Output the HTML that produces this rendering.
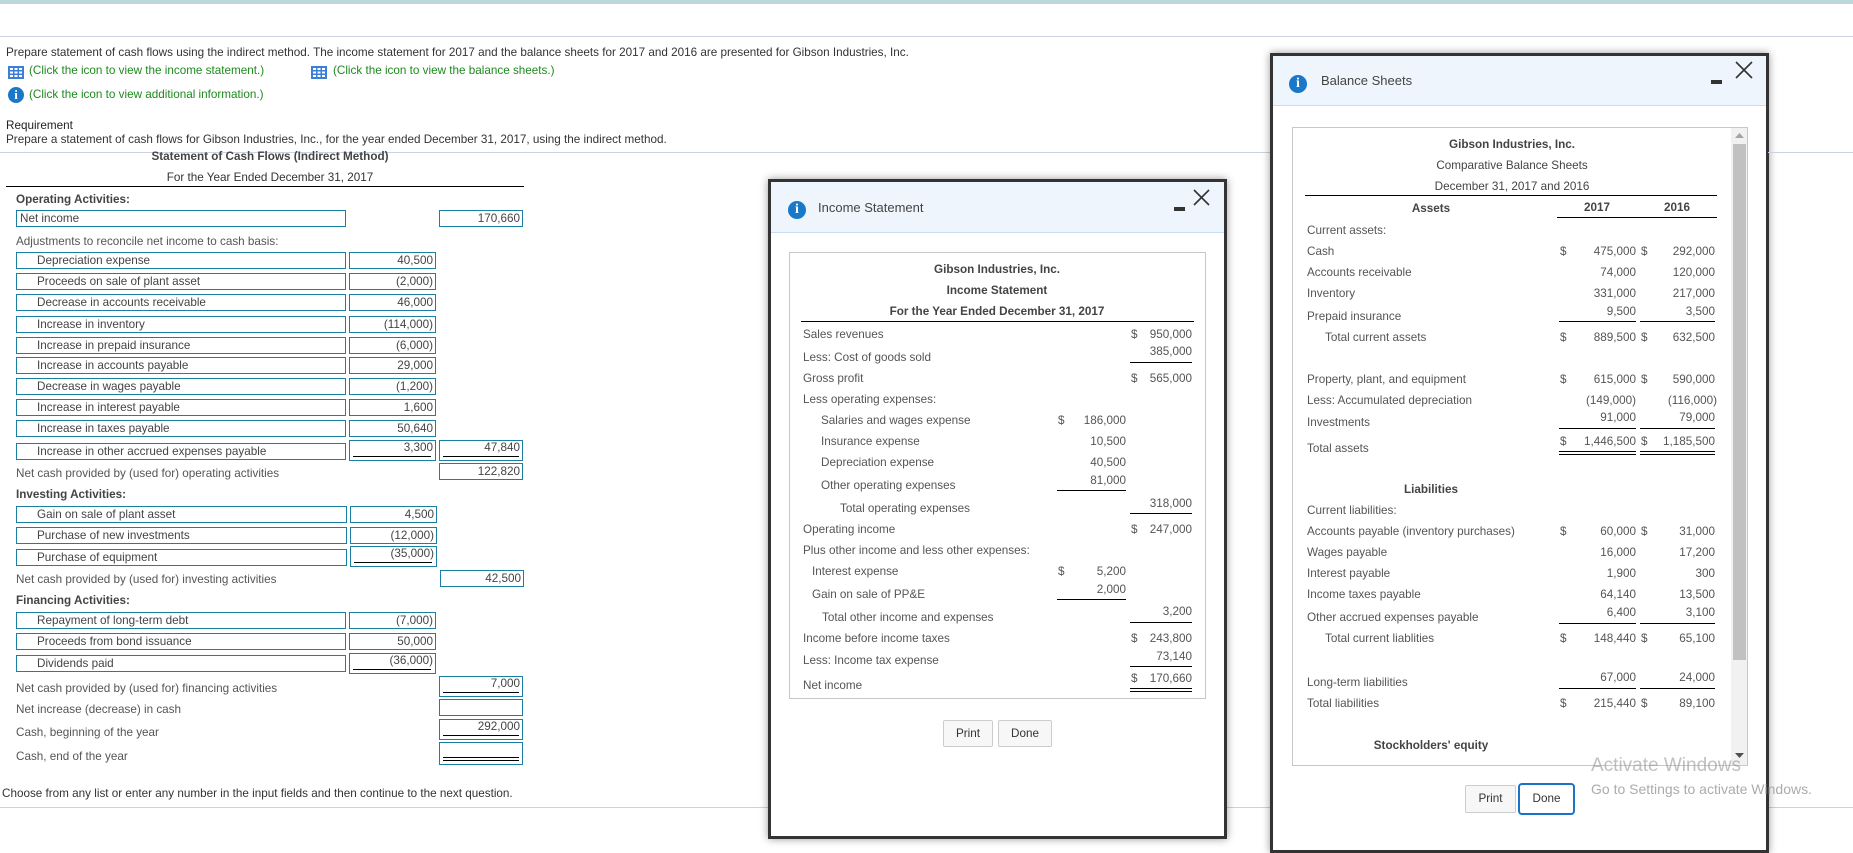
<!DOCTYPE html>
<html><head><meta charset="utf-8"><style>
*{margin:0;padding:0;box-sizing:border-box}
body{width:1853px;height:825px;overflow:hidden;background:#fff;font-family:"Liberation Sans",Arial,sans-serif;font-size:11.7px;color:#333;position:relative}
.t{position:absolute;white-space:nowrap;line-height:14px}
.r{position:absolute;white-space:nowrap;line-height:14px;text-align:right}
.c{position:absolute;white-space:nowrap;line-height:14px;text-align:center}
.b{position:absolute;border:1px solid #1b7fa3;height:17px;line-height:15px;white-space:nowrap;color:#444}
.b.l{padding-left:20px}
.b.a{text-align:right;padding-right:2px}
.hl{position:absolute;height:1px;background:#000}
.g{color:#555}
.bd{font-weight:bold;color:#444}
.grn{color:#1e8a1e}
.dlg{position:absolute;background:#fff;border:3px solid #333;box-shadow:0 0 8px rgba(0,0,0,.4)}
.btn{position:absolute;border:1px solid #ccc;background:#f7f7f7;border-radius:2px;text-align:center;color:#333}
.info{position:absolute;border-radius:50%;background:#1a78c8;color:#fff;font-weight:bold;font-family:"Liberation Serif",serif;text-align:center}
</style></head><body>
<div style="position:absolute;left:0;top:0;width:1853px;height:4px;background:#bcd8dc"></div>
<div style="position:absolute;left:0;top:36px;width:1853px;height:1px;background:#ccd3e0"></div>

<div class="t" style="left:6px;top:46px">Prepare statement of cash flows using the indirect method. The income statement for 2017 and the balance sheets for 2017 and 2016 are presented for Gibson Industries, Inc.</div>
<svg style="position:absolute;left:8px;top:66px" width="16" height="13"><rect width="16" height="13" fill="#3d7ed6"/><g fill="#fff"><rect x="2" y="2" width="3" height="2"/><rect x="6.5" y="2" width="3" height="2"/><rect x="11" y="2" width="3" height="2"/><rect x="2" y="5.5" width="3" height="2"/><rect x="6.5" y="5.5" width="3" height="2"/><rect x="11" y="5.5" width="3" height="2"/><rect x="2" y="9" width="3" height="2"/><rect x="6.5" y="9" width="3" height="2"/><rect x="11" y="9" width="3" height="2"/></g></svg>
<div class="t grn" style="left:29px;top:64px">(Click the icon to view the income statement.)</div>
<svg style="position:absolute;left:311px;top:66px" width="16" height="13"><rect width="16" height="13" fill="#3d7ed6"/><g fill="#fff"><rect x="2" y="2" width="3" height="2"/><rect x="6.5" y="2" width="3" height="2"/><rect x="11" y="2" width="3" height="2"/><rect x="2" y="5.5" width="3" height="2"/><rect x="6.5" y="5.5" width="3" height="2"/><rect x="11" y="5.5" width="3" height="2"/><rect x="2" y="9" width="3" height="2"/><rect x="6.5" y="9" width="3" height="2"/><rect x="11" y="9" width="3" height="2"/></g></svg>
<div class="t grn" style="left:333px;top:64px">(Click the icon to view the balance sheets.)</div>
<div class="info" style="left:8px;top:87px;width:16px;height:16px;line-height:16px;font-size:13px">i</div>
<div class="t grn" style="left:29px;top:88px">(Click the icon to view additional information.)</div>
<div class="t" style="left:6px;top:119px;color:#222">Requirement</div>
<div class="t" style="left:6px;top:133px">Prepare a statement of cash flows for Gibson Industries, Inc., for the year ended December 31, 2017, using the indirect method.</div>
<div style="position:absolute;left:0;top:152px;width:1853px;height:1px;background:#ccd3e0"></div>

<div class="c bd" style="left:100px;width:340px;top:150px">Statement of Cash Flows (Indirect Method)</div>
<div class="c bd" style="left:100px;width:340px;top:171px;font-weight:normal;color:#333">For the Year Ended December 31, 2017</div>
<div class="hl" style="left:6px;top:186px;width:518px"></div>
<div class="t bd" style="left:16px;top:193px">Operating Activities:</div>
<div class="b" style="left:16px;top:210px;width:330px;padding-left:3px">Net income</div>
<div class="b a" style="left:439px;top:210px;width:84px">170,660</div>
<div class="t g" style="left:16px;top:235px">Adjustments to reconcile net income to cash basis:</div>

<div class="b l" style="left:16px;top:252px;width:330px">Depreciation expense</div><div class="b a" style="left:349px;top:252px;width:87px">40,500</div>
<div class="b l" style="left:16px;top:273px;width:330px">Proceeds on sale of plant asset</div><div class="b a" style="left:349px;top:273px;width:87px">(2,000)</div>
<div class="b l" style="left:16px;top:294px;width:330px">Decrease in accounts receivable</div><div class="b a" style="left:349px;top:294px;width:87px">46,000</div>
<div class="b l" style="left:16px;top:316px;width:330px">Increase in inventory</div><div class="b a" style="left:349px;top:316px;width:87px">(114,000)</div>
<div class="b l" style="left:16px;top:337px;width:330px">Increase in prepaid insurance</div><div class="b a" style="left:349px;top:337px;width:87px">(6,000)</div>
<div class="b l" style="left:16px;top:357px;width:330px">Increase in accounts payable</div><div class="b a" style="left:349px;top:357px;width:87px">29,000</div>
<div class="b l" style="left:16px;top:378px;width:330px">Decrease in wages payable</div><div class="b a" style="left:349px;top:378px;width:87px">(1,200)</div>
<div class="b l" style="left:16px;top:399px;width:330px">Increase in interest payable</div><div class="b a" style="left:349px;top:399px;width:87px">1,600</div>
<div class="b l" style="left:16px;top:420px;width:330px">Increase in taxes payable</div><div class="b a" style="left:349px;top:420px;width:87px">50,640</div>
<div class="b l" style="left:16px;top:443px;width:330px">Increase in other accrued expenses payable</div>
<div class="b a" style="left:349px;top:440px;width:87px;height:21px;line-height:13px">3,300<div class="hl" style="left:3px;top:15px;width:78px"></div></div>
<div class="b a" style="left:439px;top:440px;width:84px;height:21px;line-height:13px">47,840<div class="hl" style="left:3px;top:15px;width:76px"></div></div>
<div class="t g" style="left:16px;top:467px">Net cash provided by (used for) operating activities</div>
<div class="b a" style="left:439px;top:463px;width:84px">122,820</div>

<div class="t bd" style="left:16px;top:488px">Investing Activities:</div>
<div class="b l" style="left:16px;top:506px;width:331px">Gain on sale of plant asset</div><div class="b a" style="left:350px;top:506px;width:87px">4,500</div>
<div class="b l" style="left:16px;top:527px;width:331px">Purchase of new investments</div><div class="b a" style="left:350px;top:527px;width:87px">(12,000)</div>
<div class="b l" style="left:16px;top:549px;width:331px">Purchase of equipment</div>
<div class="b a" style="left:350px;top:546px;width:87px;height:21px;line-height:13px">(35,000)<div class="hl" style="left:3px;top:15px;width:78px"></div></div>
<div class="t g" style="left:16px;top:573px">Net cash provided by (used for) investing activities</div>
<div class="b a" style="left:440px;top:570px;width:84px">42,500</div>

<div class="t bd" style="left:16px;top:594px">Financing Activities:</div>
<div class="b l" style="left:16px;top:612px;width:330px">Repayment of long-term debt</div><div class="b a" style="left:349px;top:612px;width:87px">(7,000)</div>
<div class="b l" style="left:16px;top:633px;width:330px">Proceeds from bond issuance</div><div class="b a" style="left:349px;top:633px;width:87px">50,000</div>
<div class="b l" style="left:16px;top:655px;width:330px">Dividends paid</div>
<div class="b a" style="left:349px;top:653px;width:87px;height:21px;line-height:13px">(36,000)<div class="hl" style="left:3px;top:15px;width:78px"></div></div>
<div class="t g" style="left:16px;top:682px">Net cash provided by (used for) financing activities</div>
<div class="b a" style="left:439px;top:676px;width:84px;height:21px;line-height:13px">7,000<div class="hl" style="left:3px;top:15px;width:76px"></div></div>
<div class="t g" style="left:16px;top:703px">Net increase (decrease) in cash</div>
<div class="b a" style="left:439px;top:699px;width:84px"></div>
<div class="t g" style="left:16px;top:726px">Cash, beginning of the year</div>
<div class="b a" style="left:439px;top:719px;width:84px;height:21px;line-height:13px">292,000<div class="hl" style="left:3px;top:15px;width:76px"></div></div>
<div class="t g" style="left:16px;top:750px">Cash, end of the year</div>
<div class="b a" style="left:439px;top:742px;width:84px;height:23px"><div class="hl" style="left:3px;top:14px;width:76px"></div><div class="hl" style="left:3px;top:17px;width:76px"></div></div>

<div class="t" style="left:2px;top:787px">Choose from any list or enter any number in the input fields and then continue to the next question.</div>
<div style="position:absolute;left:0;top:807px;width:1853px;height:1px;background:#ccd3e0"></div>

<!-- Income Statement dialog -->
<div class="dlg" style="left:768px;top:179px;width:459px;height:660px">
  <div style="position:absolute;left:0;top:0;width:453px;height:51px;background:#eef5fd;border-bottom:1px solid #c5def5"></div>
  <div class="info" style="left:17px;top:19px;width:18px;height:18px;line-height:18px;font-size:14px">i</div>
  <div class="t" style="left:47px;top:19px;font-size:13px;color:#444">Income Statement</div>
  <div style="position:absolute;left:403px;top:25px;width:11px;height:4px;background:#333"></div>
  <svg style="position:absolute;left:422px;top:7px" width="17" height="17"><path d="M1 1L16 16M16 1L1 16" stroke="#333" stroke-width="1.6"/></svg>
  <div style="position:absolute;left:18px;top:70px;width:417px;height:447px;border:1px solid #c8c8c8"></div>
</div>
<div style="position:absolute;left:0;top:0">
<div class="c bd" style="left:897px;width:200px;top:263px">Gibson Industries, Inc.</div>
<div class="c bd" style="left:897px;width:200px;top:284px">Income Statement</div>
<div class="c bd" style="left:877px;width:240px;top:305px">For the Year Ended December 31, 2017</div>
<div class="hl" style="left:801px;top:321px;width:393px"></div>
<div class="t g" style="left:803px;top:328px">Sales revenues</div><div class="t g" style="left:1131px;top:328px">$</div><div class="r g" style="left:1140px;width:52px;top:328px">950,000</div>
<div class="t g" style="left:803px;top:351px">Less: Cost of goods sold</div><div class="r g" style="left:1140px;width:52px;top:345px">385,000</div><div class="hl" style="left:1130px;top:362px;width:62px"></div>
<div class="t g" style="left:803px;top:372px">Gross profit</div><div class="t g" style="left:1131px;top:372px">$</div><div class="r g" style="left:1140px;width:52px;top:372px">565,000</div>
<div class="t g" style="left:803px;top:393px">Less operating expenses:</div>
<div class="t g" style="left:821px;top:414px">Salaries and wages expense</div><div class="t g" style="left:1058px;top:414px">$</div><div class="r g" style="left:1074px;width:52px;top:414px">186,000</div>
<div class="t g" style="left:821px;top:435px">Insurance expense</div><div class="r g" style="left:1074px;width:52px;top:435px">10,500</div>
<div class="t g" style="left:821px;top:456px">Depreciation expense</div><div class="r g" style="left:1074px;width:52px;top:456px">40,500</div>
<div class="t g" style="left:821px;top:479px">Other operating expenses</div><div class="r g" style="left:1074px;width:52px;top:474px">81,000</div><div class="hl" style="left:1057px;top:490px;width:69px"></div>
<div class="t g" style="left:840px;top:502px">Total operating expenses</div><div class="r g" style="left:1140px;width:52px;top:497px">318,000</div><div class="hl" style="left:1130px;top:513px;width:62px"></div>
<div class="t g" style="left:803px;top:523px">Operating income</div><div class="t g" style="left:1131px;top:523px">$</div><div class="r g" style="left:1140px;width:52px;top:523px">247,000</div>
<div class="t g" style="left:803px;top:544px">Plus other income and less other expenses:</div>
<div class="t g" style="left:812px;top:565px">Interest expense</div><div class="t g" style="left:1058px;top:565px">$</div><div class="r g" style="left:1074px;width:52px;top:565px">5,200</div>
<div class="t g" style="left:812px;top:588px">Gain on sale of PP&amp;E</div><div class="r g" style="left:1074px;width:52px;top:583px">2,000</div><div class="hl" style="left:1057px;top:599px;width:69px"></div>
<div class="t g" style="left:822px;top:611px">Total other income and expenses</div><div class="r g" style="left:1140px;width:52px;top:605px">3,200</div><div class="hl" style="left:1130px;top:622px;width:62px"></div>
<div class="t g" style="left:803px;top:632px">Income before income taxes</div><div class="t g" style="left:1131px;top:632px">$</div><div class="r g" style="left:1140px;width:52px;top:632px">243,800</div>
<div class="t g" style="left:803px;top:654px">Less: Income tax expense</div><div class="r g" style="left:1140px;width:52px;top:650px">73,140</div><div class="hl" style="left:1130px;top:666px;width:62px"></div>
<div class="t g" style="left:803px;top:679px">Net income</div><div class="t g" style="left:1131px;top:672px">$</div><div class="r g" style="left:1140px;width:52px;top:672px">170,660</div><div class="hl" style="left:1130px;top:688px;width:62px"></div><div class="hl" style="left:1130px;top:691px;width:62px"></div>
<div class="btn" style="left:943px;top:720px;width:50px;height:27px;line-height:25px">Print</div>
<div class="btn" style="left:998px;top:720px;width:54px;height:27px;line-height:25px">Done</div>
</div>

<!-- Balance Sheets dialog -->
<div class="dlg" style="left:1270px;top:53px;width:499px;height:800px">
  <div style="position:absolute;left:0;top:0;width:493px;height:50px;background:#eef5fd;border-bottom:1px solid #c5def5"></div>
  <div class="info" style="left:16px;top:19px;width:18px;height:18px;line-height:18px;font-size:14px">i</div>
  <div class="t" style="left:48px;top:18px;font-size:13px;color:#444">Balance Sheets</div>
  <div style="position:absolute;left:438px;top:24px;width:11px;height:4px;background:#333"></div>
  <div style="position:absolute;left:19px;top:71px;width:456px;height:639px;border:1px solid #c8c8c8;overflow:hidden">
    <div style="position:absolute;left:438px;top:0;width:16px;height:637px;background:#f1f1f1"></div>
    <div style="position:absolute;left:440px;top:16px;width:13px;height:516px;background:#c1c1c1"></div>
    <svg style="position:absolute;left:442px;top:5px" width="9" height="6"><path d="M0 5L4.5 0L9 5Z" fill="#a3a3a3"/></svg>
    <svg style="position:absolute;left:442px;top:625px" width="9" height="6"><path d="M0 0L4.5 5L9 0Z" fill="#505050"/></svg>
  </div>
</div>
<svg style="position:absolute;left:1735px;top:61px" width="18" height="18"><path d="M1 1L17 17M17 1L1 17" stroke="#333" stroke-width="1.6"/></svg>
<div style="position:absolute;left:1768px;top:152px;width:85px;height:1px;background:#ccd3e0"></div>
<div style="position:absolute;left:0;top:0">
<div class="c bd" style="left:1412px;width:200px;top:138px">Gibson Industries, Inc.</div>
<div class="c bd" style="left:1412px;width:200px;top:159px;font-weight:normal">Comparative Balance Sheets</div>
<div class="c bd" style="left:1412px;width:200px;top:180px;font-weight:normal">December 31, 2017 and 2016</div>
<div class="hl" style="left:1305px;top:195px;width:412px"></div>
<div class="c bd" style="left:1381px;width:100px;top:202px">Assets</div>
<div class="c bd" style="left:1567px;width:60px;top:201px">2017</div>
<div class="c bd" style="left:1647px;width:60px;top:201px">2016</div>
<div class="hl" style="left:1557px;top:217px;width:160px"></div>
<div class="t g" style="left:1307px;top:224px">Current assets:</div>
<div class="t g" style="left:1307px;top:245px">Cash</div><div class="t g" style="left:1560px;top:245px">$</div><div class="r g" style="left:1580px;width:56px;top:245px">475,000</div><div class="t g" style="left:1641px;top:245px">$</div><div class="r g" style="left:1660px;width:55px;top:245px">292,000</div>
<div class="t g" style="left:1307px;top:266px">Accounts receivable</div><div class="r g" style="left:1580px;width:56px;top:266px">74,000</div><div class="r g" style="left:1660px;width:55px;top:266px">120,000</div>
<div class="t g" style="left:1307px;top:287px">Inventory</div><div class="r g" style="left:1580px;width:56px;top:287px">331,000</div><div class="r g" style="left:1660px;width:55px;top:287px">217,000</div>
<div class="t g" style="left:1307px;top:310px">Prepaid insurance</div><div class="r g" style="left:1580px;width:56px;top:305px">9,500</div><div class="r g" style="left:1660px;width:55px;top:305px">3,500</div>
<div class="hl" style="left:1559px;top:321px;width:77px"></div><div class="hl" style="left:1640px;top:321px;width:75px"></div>
<div class="t g" style="left:1325px;top:331px">Total current assets</div><div class="t g" style="left:1560px;top:331px">$</div><div class="r g" style="left:1580px;width:56px;top:331px">889,500</div><div class="t g" style="left:1641px;top:331px">$</div><div class="r g" style="left:1660px;width:55px;top:331px">632,500</div>
<div class="t g" style="left:1307px;top:373px">Property, plant, and equipment</div><div class="t g" style="left:1560px;top:373px">$</div><div class="r g" style="left:1580px;width:56px;top:373px">615,000</div><div class="t g" style="left:1641px;top:373px">$</div><div class="r g" style="left:1660px;width:55px;top:373px">590,000</div>
<div class="t g" style="left:1307px;top:394px">Less: Accumulated depreciation</div><div class="r g" style="left:1570px;width:66px;top:394px">(149,000)</div><div class="r g" style="left:1650px;width:67px;top:394px">(116,000)</div>
<div class="t g" style="left:1307px;top:416px">Investments</div><div class="r g" style="left:1580px;width:56px;top:411px">91,000</div><div class="r g" style="left:1660px;width:55px;top:411px">79,000</div>
<div class="hl" style="left:1559px;top:428px;width:77px"></div><div class="hl" style="left:1640px;top:428px;width:75px"></div>
<div class="t g" style="left:1307px;top:442px">Total assets</div><div class="t g" style="left:1560px;top:435px">$</div><div class="r g" style="left:1570px;width:66px;top:435px">1,446,500</div><div class="t g" style="left:1641px;top:435px">$</div><div class="r g" style="left:1650px;width:65px;top:435px">1,185,500</div>
<div class="hl" style="left:1559px;top:451px;width:77px"></div><div class="hl" style="left:1640px;top:451px;width:75px"></div><div class="hl" style="left:1559px;top:454px;width:77px"></div><div class="hl" style="left:1640px;top:454px;width:75px"></div>
<div class="c bd" style="left:1381px;width:100px;top:483px">Liabilities</div>
<div class="t g" style="left:1307px;top:504px">Current liabilities:</div>
<div class="t g" style="left:1307px;top:525px">Accounts payable (inventory purchases)</div><div class="t g" style="left:1560px;top:525px">$</div><div class="r g" style="left:1580px;width:56px;top:525px">60,000</div><div class="t g" style="left:1641px;top:525px">$</div><div class="r g" style="left:1660px;width:55px;top:525px">31,000</div>
<div class="t g" style="left:1307px;top:546px">Wages payable</div><div class="r g" style="left:1580px;width:56px;top:546px">16,000</div><div class="r g" style="left:1660px;width:55px;top:546px">17,200</div>
<div class="t g" style="left:1307px;top:567px">Interest payable</div><div class="r g" style="left:1580px;width:56px;top:567px">1,900</div><div class="r g" style="left:1660px;width:55px;top:567px">300</div>
<div class="t g" style="left:1307px;top:588px">Income taxes payable</div><div class="r g" style="left:1580px;width:56px;top:588px">64,140</div><div class="r g" style="left:1660px;width:55px;top:588px">13,500</div>
<div class="t g" style="left:1307px;top:611px">Other accrued expenses payable</div><div class="r g" style="left:1580px;width:56px;top:606px">6,400</div><div class="r g" style="left:1660px;width:55px;top:606px">3,100</div>
<div class="hl" style="left:1559px;top:623px;width:77px"></div><div class="hl" style="left:1640px;top:623px;width:75px"></div>
<div class="t g" style="left:1325px;top:632px">Total current liablities</div><div class="t g" style="left:1560px;top:632px">$</div><div class="r g" style="left:1580px;width:56px;top:632px">148,440</div><div class="t g" style="left:1641px;top:632px">$</div><div class="r g" style="left:1660px;width:55px;top:632px">65,100</div>
<div class="t g" style="left:1307px;top:676px">Long-term liabilities</div><div class="r g" style="left:1580px;width:56px;top:671px">67,000</div><div class="r g" style="left:1660px;width:55px;top:671px">24,000</div>
<div class="hl" style="left:1559px;top:688px;width:77px"></div><div class="hl" style="left:1640px;top:688px;width:75px"></div>
<div class="t g" style="left:1307px;top:697px">Total liabilities</div><div class="t g" style="left:1560px;top:697px">$</div><div class="r g" style="left:1580px;width:56px;top:697px">215,440</div><div class="t g" style="left:1641px;top:697px">$</div><div class="r g" style="left:1660px;width:55px;top:697px">89,100</div>
<div class="c bd" style="left:1371px;width:120px;top:739px">Stockholders' equity</div>
<div class="btn" style="left:1465px;top:785px;width:51px;height:28px;line-height:26px">Print</div>
<div class="btn" style="left:1518px;top:783px;width:57px;height:32px;line-height:28px;border:2px solid #1a73c8;border-radius:4px;background:#fff">Done</div>
<div class="t" style="left:1591px;top:755px;font-size:19px;line-height:22px;color:rgba(150,150,150,.6)">Activate Windows</div>
<div class="t" style="left:1591px;top:780px;font-size:14px;line-height:18px;color:rgba(150,150,150,.8)">Go to Settings to activate Windows.</div>
</div>
</body></html>
